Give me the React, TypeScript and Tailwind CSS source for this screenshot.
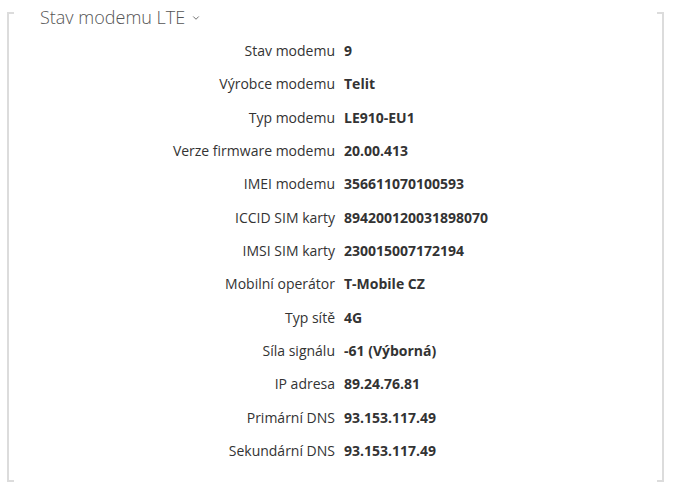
import { ChevronDown } from "lucide-react";

const rows: Array<[string, string]> = [
  ["Stav modemu", "9"],
  ["Výrobce modemu", "Telit"],
  ["Typ modemu", "LE910-EU1"],
  ["Verze firmware modemu", "20.00.413"],
  ["IMEI modemu", "356611070100593"],
  ["ICCID SIM karty", "894200120031898070"],
  ["IMSI SIM karty", "230015007172194"],
  ["Mobilní operátor", "T-Mobile CZ"],
  ["Typ sítě", "4G"],
  ["Síla signálu", "-61 (Výborná)"],
  ["IP adresa", "89.24.76.81"],
  ["Primární DNS", "93.153.117.49"],
  ["Sekundární DNS", "93.153.117.49"],
];

export default function App() {
  return (
    <div
      className="w-[684px] h-[495px] bg-white pt-[12px] pl-[7px] pr-[20px] text-[#333]"
      style={{ fontFamily: '"Open Sans", "Noto Sans", sans-serif' }}
    >
      <div className="flex">
        {/* left bracket */}
        <div className="w-[7px] border-l-2 border-y-2 border-[#dcdcdc]" />

        <div className="flex-1 -mt-[12px] pb-[15px]">
          <div className="h-[34px] flex items-center pl-[26px] gap-[6px] text-[#555]">
            <span className="text-[18px] font-light">Stav modemu LTE</span>
            <ChevronDown className="w-[10px] h-[10px] mt-[2px]" strokeWidth={2} />
          </div>

          <div className="grid grid-cols-[321px_1fr] gap-x-[9px]">
            {rows.map(([label, value]) => (
              <div key={label} className="contents">
                <div className="h-[33.33px] flex items-center justify-end text-[14px]">
                  {label}
                </div>
                <div className="h-[33.33px] flex items-center text-[14px] font-bold">
                  {value}
                </div>
              </div>
            ))}
          </div>
        </div>

        {/* right bracket */}
        <div className="w-[7px] border-r-2 border-y-2 border-[#dcdcdc]" />
      </div>
    </div>
  );
}
